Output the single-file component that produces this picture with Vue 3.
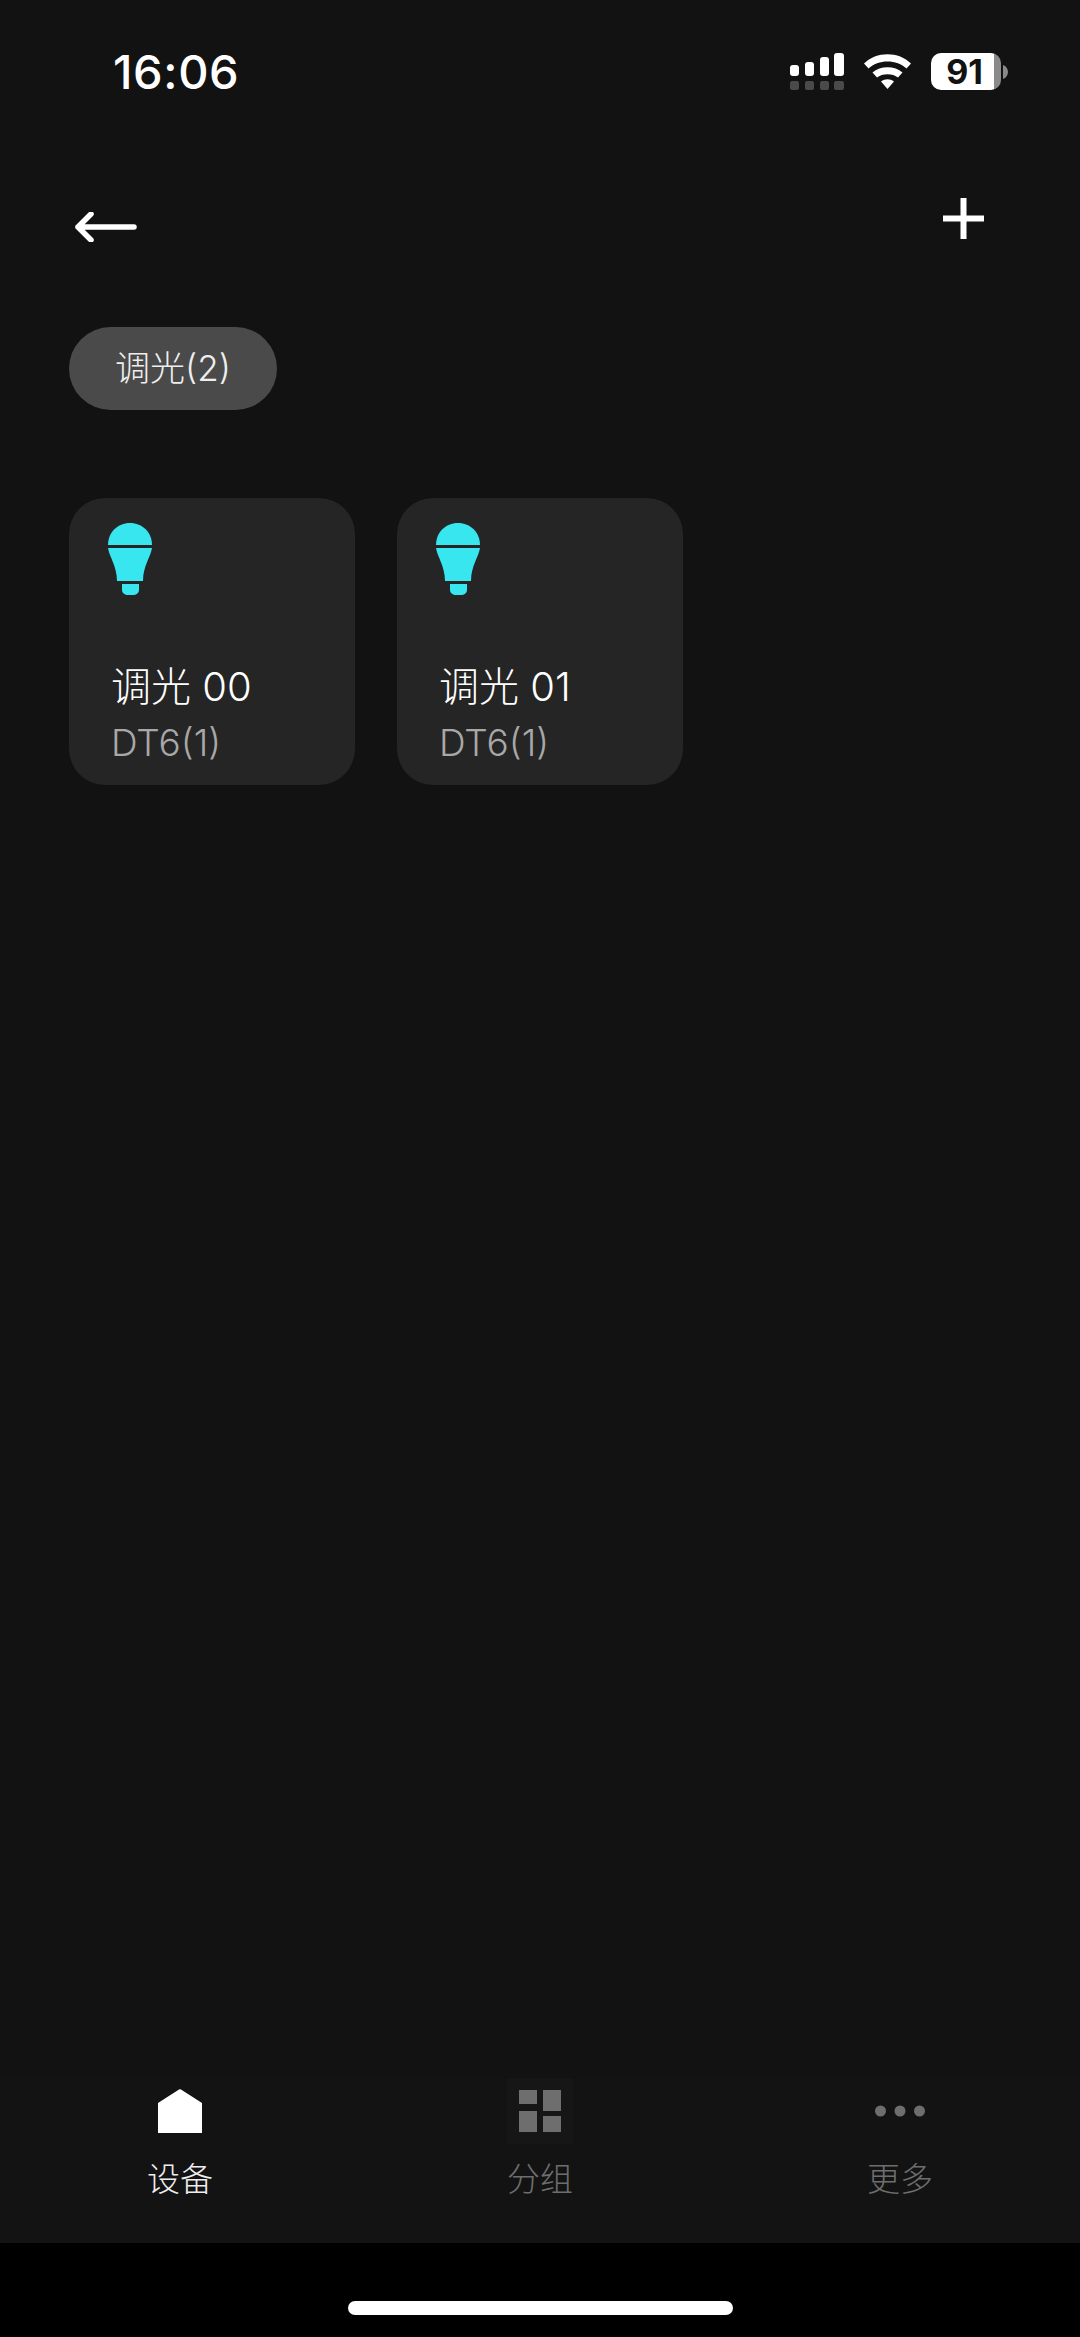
<template>
  <div class="page">
    <div class="status">
      <span class="time">16:06</span>
      <div class="status-right">
        <svg class="status-icons" width="121" height="38" viewBox="0 0 121 38">
          <rect x="0" y="12" width="9" height="11" rx="3" fill="#fff" />
          <rect x="15" y="9" width="9" height="14" rx="3" fill="#fff" />
          <rect x="30" y="4" width="9" height="19" rx="3" fill="#fff" />
          <rect x="44" y="0" width="10" height="23" rx="3" fill="#fff" />
          <rect x="0" y="28" width="9" height="9" rx="2" fill="#4a4a4a" />
          <rect x="15" y="28" width="9" height="9" rx="2" fill="#4a4a4a" />
          <rect x="30" y="28" width="9" height="9" rx="2" fill="#4a4a4a" />
          <rect x="44" y="28" width="10" height="9" rx="2" fill="#4a4a4a" />
          <path d="M74 10.500C86 -2 109 -2 121 10.500L116.500 15.500C107 6 88 6 78.500 15.500Z" fill="#fff" />
          <path d="M82.500 19.500C90 12.500 105 12.500 112.500 19.500L108 24.500C103 20 92 20 87 24.500Z" fill="#fff" />
          <path d="M91 28.500C95 25.500 100 25.500 104 28.500L97.500 36Z" fill="#fff" />
        </svg>
        <div class="battery">91</div>
        <svg class="nub" width="5" height="14" viewBox="0 0 5 14">
          <path d="M0 0C3 1 5 4 5 7C5 10 3 13 0 14Z" fill="#8a8a8a" />
        </svg>
      </div>
    </div>

    <div class="header">
      <svg class="back" width="62" height="30" viewBox="0 0 62 30">
        <path d="M16 2L3 15L16 28M3 15H59" fill="none" stroke="#fff" stroke-width="5.500" stroke-linecap="round" stroke-linejoin="round" />
      </svg>
      <svg width="41" height="41" viewBox="0 0 41 41">
        <path d="M17.500 0h6v17.500H41v6H23.500V41h-6V23.500H0v-6h17.500Z" fill="#fff" />
      </svg>
    </div>

    <div class="chip">调光(2)</div>

    <div class="devices">
      <div v-for="d in devices" :key="d.name" class="card">
        <svg width="44" height="72" viewBox="0 0 44 72">
          <path d="M0 22C0 9.500 9.500 0 22 0C34.500 0 44 9.500 44 22Z" fill="#38e6f0" />
          <path d="M0 25H44C43 33 35 43 35 58H9C9 43 1 33 0 25Z" fill="#38e6f0" />
          <path d="M14 61H31V67C31 70 28 72 25 72H20C17 72 14 70 14 67Z" fill="#38e6f0" />
        </svg>
        <div class="name">{{ d.name }}</div>
        <div class="type">{{ d.type }}</div>
      </div>
    </div>

    <div class="tabs">
      <div v-for="t in tabs" :key="t.label" class="tab" :class="{ active: t.active }">
        <div class="tab-icon" :class="{ boxed: t.id === 'group' }">
          <svg v-if="t.id === 'home'" width="44" height="44" viewBox="0 0 44 44">
            <path d="M0 14L21 0.500Q22 0 23 0.500L44 14V44H0Z" fill="#fff" />
          </svg>
          <svg v-else-if="t.id === 'group'" width="42" height="42" viewBox="0 0 42 42" fill="#6e6e6e">
            <rect x="0" y="0" width="18" height="14" />
            <rect x="24" y="0" width="18" height="21" />
            <rect x="0" y="21" width="18" height="21" />
            <rect x="24" y="26" width="18" height="16" />
          </svg>
          <svg v-else width="50" height="12" viewBox="0 0 50 12" fill="#6e6e6e">
            <circle cx="5.500" cy="6" r="5.500" />
            <circle cx="25" cy="6" r="5.500" />
            <circle cx="44.500" cy="6" r="5.500" />
          </svg>
        </div>
        <span class="tab-label">{{ t.label }}</span>
      </div>
    </div>

    <div class="home-area">
      <div class="home-bar"></div>
    </div>
  </div>
</template>

<script setup>
const devices = [
  { name: '调光 00', type: 'DT6(1)' },
  { name: '调光 01', type: 'DT6(1)' }
]

const tabs = [
  { id: 'home', label: '设备', active: true },
  { id: 'group', label: '分组', active: false },
  { id: 'more', label: '更多', active: false }
]
</script>

<style>
html,
body {
  margin: 0;
  background: #121212;
}
</style>

<style scoped>
.page {
  width: 1080px;
  height: 2337px;
  display: flex;
  flex-direction: column;
  background: #121212;
  color: #fff;
  font-family: Inter, "Noto Sans CJK SC", sans-serif;
  overflow: hidden;
}

.status {
  height: 198px;
  box-sizing: border-box;
  padding: 53px 72px 0 113px;
  display: flex;
  justify-content: space-between;
  align-items: flex-start;
  flex-shrink: 0;
}

.time {
  font-size: 47px;
  line-height: 38px;
  font-weight: 500;
  letter-spacing: 0.6px;
}

.status-right {
  display: flex;
  align-items: flex-start;
}

.status-icons {
  display: block;
}

.battery {
  width: 70px;
  height: 37px;
  margin-left: 20px;
  padding-right: 3px;
  box-sizing: border-box;
  border-radius: 10px;
  background: linear-gradient(to right, #fff 63px, #8a8a8a 63px);
  color: #121212;
  font-size: 34px;
  font-weight: 700;
  line-height: 37px;
  text-align: center;
}

.nub {
  margin: 12px 0 0 2px;
}

.header {
  height: 129px;
  box-sizing: border-box;
  padding: 0 96px 0 75px;
  display: flex;
  justify-content: space-between;
  align-items: flex-start;
  flex-shrink: 0;
}

.back {
  margin-top: 14px;
}

.chip {
  align-self: flex-start;
  height: 83px;
  width: 208px;
  margin-left: 69px;
  border-radius: 42px;
  background: #4a4a4a;
  color: #eee;
  font-size: 35px;
  font-weight: 300;
  line-height: 83px;
  text-align: center;
  flex-shrink: 0;
}

.devices {
  flex: 1;
  padding: 88px 0 0 69px;
  display: flex;
  align-items: flex-start;
  gap: 42px;
}

.card {
  width: 286px;
  height: 287px;
  box-sizing: border-box;
  padding: 25px 0 0 39px;
  border-radius: 36px;
  background: #252525;
}

.card svg {
  display: block;
}

.name {
  margin: 65px 0 0 3px;
  font-size: 40px;
  line-height: 54px;
  font-weight: 300;
  color: #fff;
}

.type {
  margin: 6px 0 0 3px;
  font-size: 37px;
  line-height: 46px;
  font-weight: 300;
  color: #a8a8a8;
}

.tabs {
  height: 165px;
  display: flex;
  background: #131313;
  flex-shrink: 0;
}

.tab {
  flex: 1;
  display: flex;
  flex-direction: column;
  align-items: center;
  color: #6e6e6e;
}

.tab.active {
  color: #eee;
}

.tab-icon {
  width: 66px;
  height: 66px;
  display: flex;
  align-items: center;
  justify-content: center;
}

.tab-icon.boxed {
  background: #161616;
}

.tab-label {
  margin-top: 12px;
  font-size: 33px;
  line-height: 46px;
  font-weight: 300;
}

.home-area {
  height: 94px;
  background: #000;
  display: flex;
  justify-content: center;
  padding-top: 58px;
  box-sizing: border-box;
  flex-shrink: 0;
}

.home-bar {
  width: 385px;
  height: 14px;
  border-radius: 7px;
  background: #fff;
}
</style>
